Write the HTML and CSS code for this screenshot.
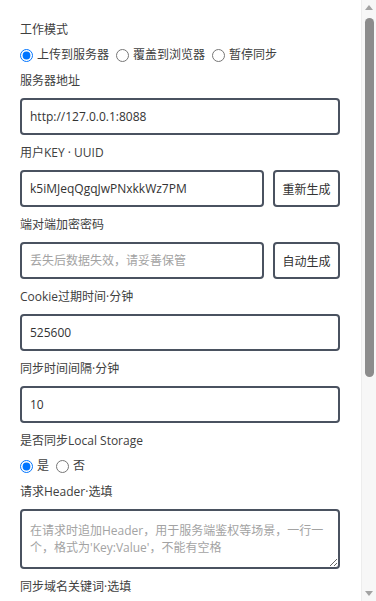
FILE: index.html
```html
<!DOCTYPE html>
<html lang="zh-CN">
<head>
<meta charset="utf-8">
<title>设置</title>
<link rel="stylesheet" href="styles.css">
</head>
<body>
<div class="page">
  <form class="settings">
    <div class="field choice">
      <div class="label">工作模式</div>
      <div class="radios">
        <label class="opt"><input type="radio" name="mode" checked>上传到服务器</label>
        <label class="opt"><input type="radio" name="mode">覆盖到浏览器</label>
        <label class="opt"><input type="radio" name="mode">暂停同步</label>
      </div>
    </div>
    <div class="field">
      <div class="label">服务器地址</div>
      <input class="text" type="text" value="http://127.0.0.1:8088">
    </div>
    <div class="field">
      <div class="label">用户KEY · UUID</div>
      <div class="row">
        <input class="text grow" type="text" value="k5iMJeqQgqJwPNxkkWz7PM">
        <button class="btn" type="button">重新生成</button>
      </div>
    </div>
    <div class="field">
      <div class="label">端对端加密密码</div>
      <div class="row">
        <input class="text grow" type="text" placeholder="丢失后数据失效，请妥善保管">
        <button class="btn" type="button">自动生成</button>
      </div>
    </div>
    <div class="field">
      <div class="label">Cookie过期时间·分钟</div>
      <input class="text" type="text" value="525600">
    </div>
    <div class="field">
      <div class="label">同步时间间隔·分钟</div>
      <input class="text" type="text" value="10">
    </div>
    <div class="field choice">
      <div class="label">是否同步Local Storage</div>
      <div class="radios">
        <label class="opt"><input type="radio" name="ls" checked>是</label>
        <label class="opt"><input type="radio" name="ls">否</label>
      </div>
    </div>
    <div class="field">
      <div class="label">请求Header·选填</div>
      <textarea class="area" rows="2" placeholder="在请求时追加Header，用于服务端鉴权等场景，一行一个，格式为'Key:Value'，不能有空格"></textarea>
    </div>
    <div class="field">
      <div class="label">同步域名关键词·选填</div>
      <textarea class="area" rows="2" placeholder="一行一个，同步包含关键词的网站，留空则同步全部"></textarea>
    </div>
  </form>
  <div class="scrollbar" aria-hidden="true">
    <span class="arrow up"></span>
    <span class="thumb"></span>
    <span class="track-rest"></span>
    <span class="arrow down"></span>
  </div>
</div>
</body>
</html>
```
FILE: styles.css
```css
html, body {
  margin: 0;
  padding: 0;
  background: #ffffff;
}
body {
  font-family: "Segoe UI", "Open Sans", "Noto Sans CJK SC", sans-serif;
  font-size: 12px;
  color: #404040;
}
.page {
  display: flex;
  height: 100vh;
  overflow: hidden;
}
.settings {
  flex: 1;
  min-width: 0;
  padding: 21px 21px 0 20px;
  overflow: hidden;
}
.field {
  margin-bottom: 9px;
}
.field.choice {
  margin-bottom: 8px;
}
.label {
  line-height: 18px;
  margin-bottom: 8px;
}
.radios {
  display: flex;
  align-items: center;
  gap: 7px;
  height: 18px;
  margin-top: -1px;
}
.opt {
  display: inline-flex;
  align-items: center;
  line-height: 18px;
}
.opt input {
  margin: 0 4px 0 0;
  width: 13px;
  height: 13px;
  accent-color: #0075ff;
}
.text, .area, .btn {
  font-family: inherit;
  font-size: 12px;
  box-sizing: border-box;
  border: 2px solid #4a5260;
  border-radius: 4px;
  background: #ffffff;
  color: #333333;
}
.text {
  display: block;
  width: 100%;
  height: 37px;
  padding: 0 8px;
  outline: none;
}
.text::placeholder, .area::placeholder {
  color: #a3a3a3;
}
.row {
  display: flex;
  gap: 9px;
}
.grow {
  flex: 1;
  min-width: 0;
}
.btn {
  height: 37px;
  width: 67px;
  padding: 0;
  flex: none;
  cursor: pointer;
}
.area {
  display: block;
  width: 100%;
  height: 60px;
  padding: 11px 8px;
  line-height: 17px;
  resize: vertical;
  outline: none;
}

/* drawn scrollbar */
.scrollbar {
  flex: none;
  width: 15px;
  box-sizing: border-box;
  background: #f7f7f7;
  border-left: 1px solid #ededed;
  display: flex;
  flex-direction: column;
  align-items: center;
  padding: 5px 0 5px;
}
.arrow {
  width: 0;
  height: 0;
  border-left: 4px solid transparent;
  border-right: 4px solid transparent;
}
.arrow.up {
  border-bottom: 5px solid #a3a3a3;
}
.arrow.down {
  border-top: 5px solid #a3a3a3;
}
.thumb {
  margin-top: 8px;
  width: 9px;
  height: 359px;
  border-radius: 5px;
  background: #8c8c8c;
}
.track-rest {
  flex: 1;
}
```
